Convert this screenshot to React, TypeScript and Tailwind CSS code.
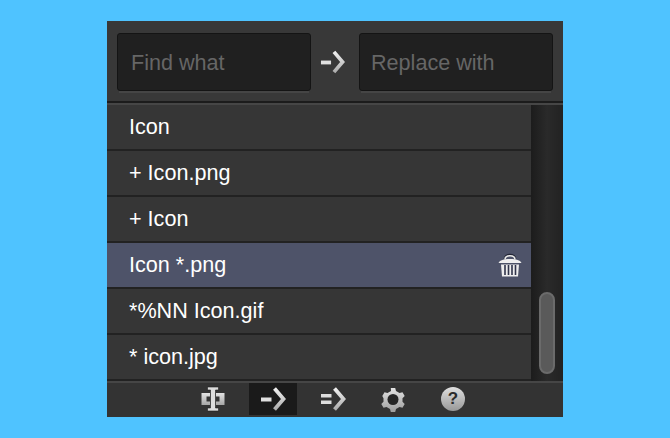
import React from "react";

const rows = ["Icon", "+ Icon.png", "+ Icon", "Icon *.png", "*%NN Icon.gif", "* icon.jpg"];

const Arrow = () => (
  <svg width="26" height="26" viewBox="0 0 26 26" fill="none">
    <defs>
      <linearGradient id="metal" gradientUnits="userSpaceOnUse" x1="0" y1="1" x2="0" y2="25">
        <stop offset="0" stopColor="#f4f4f4" />
        <stop offset="1" stopColor="#a8a8a8" />
      </linearGradient>
    </defs>
    <path d="M1 11.500h10.500v4H1z" fill="#e0e0e0" />
    <path d="M14.500 2.500l9 10.500-9 10.500" stroke="url(#metal)" strokeWidth="3.800" />
  </svg>
);

const DoubleArrow = () => (
  <svg width="26" height="26" viewBox="0 0 26 26" fill="none">
    <path d="M1 8h10.500v3.500H1zM1 14.500h10.500v3.500H1z" fill="#dedede" />
    <path d="M14.500 2.500l9 10.500-9 10.500" stroke="url(#metal)" strokeWidth="3.800" />
  </svg>
);

const Rename = () => (
  <svg width="26" height="26" viewBox="0 0 26 26" fill="none">
    <defs>
      <linearGradient id="block" x1="0" y1="0" x2="0" y2="1">
        <stop offset="0" stopColor="#e2e2e2" />
        <stop offset="1" stopColor="#a6a6a6" />
      </linearGradient>
    </defs>
    <path d="M10 7H1.500v12H10v-3.500H6.500v-5H10zM16 7h8.500v12H16v-3.500h3.500v-5H16z" fill="url(#block)" />
    <path d="M7.500 1h11v3H15.500v18h3v3h-11v-3h3V4h-3z" fill="#dcdcdc" stroke="#1f1f1f" strokeWidth="0.600" />
  </svg>
);

const Gear = () => (
  <svg width="26" height="26" viewBox="0 0 26 26" fill="none">
    <defs>
      <linearGradient id="gear" gradientUnits="userSpaceOnUse" x1="0" y1="1" x2="0" y2="25">
        <stop offset="0" stopColor="#e6e6e6" />
        <stop offset="1" stopColor="#a0a0a0" />
      </linearGradient>
    </defs>
    <path
      d="M10.800 2h4.400l.8 3 3.500 2 3-.8 2.200 3.800-2.200 2.200v3.600l2.200 2.200-2.200 3.800-3-.8-3.500 2-.8 3h-4.400l-.8-3-3.500-2-3 .8-2.200-3.800 2.200-2.200V12.200L2.300 10l2.200-3.800 3 .8 3.500-2z"
      fill="url(#gear)"
    />
    <circle cx="13" cy="13.500" r="5.500" fill="#262626" />
  </svg>
);

const Help = () => (
  <div className="flex h-[24px] w-[24px] items-center justify-center rounded-full bg-gradient-to-b from-[#e0e0e0] to-[#989898] text-[17px] font-bold text-[#2b2b2b]">
    ?
  </div>
);

const Trash = () => (
  <svg width="24" height="24" viewBox="0 0 24 24" fill="none">
    <path d="M6.500 6.500c0-6.500 11-6.500 11 0" stroke="#232636" strokeWidth="2" />
    <path d="M7 6.500c0-5 10-5 10 0" stroke="#e8e8e8" strokeWidth="1.600" />
    <path d="M.5 10c1.500-3 5-4 11.500-4s10 1 11.500 4z" fill="#efefef" />
    <path d="M3 11.500h18l-1 12H4z" fill="#eeeeee" />
    <path d="M7 12v10M10.500 12v10M14 12v10M17.500 12v10" stroke="#30344a" strokeWidth="1.600" />
  </svg>
);

const Field = ({ text, className }: { text: string; className: string }) => (
  <div className="h-[60px] flex-1 px-[2px]">
    <div className={`-mx-[2px] flex h-[58px] items-center rounded-[3px] border border-[#141414] bg-[#202020] pt-[2px] text-[21.6px] text-[#666666] ${className}`}>
      {text}
    </div>
    <div className="h-[2px] bg-[#454545]" />
  </div>
);

export default function App() {
  return (
    <div className="h-[438px] w-[670px] bg-[#4fc3ff] pt-[21px] font-['Liberation_Sans',sans-serif]">
      <div className="mx-auto flex h-[396px] w-[456px] flex-col bg-[#383838]">
        <div className="flex h-[80px] shrink-0 items-start gap-[9px] px-[10px] pt-[12px]">
          <Field text="Find what" className="pl-[13px]" />
          <div className="flex h-[58px] w-[30px] items-center justify-center pr-[5px]">
            <Arrow />
          </div>
          <Field text="Replace with" className="pl-[11px]" />
        </div>
        <div className="h-[2px] shrink-0 bg-[#1c1c1c]" />
        <div className="h-[2px] shrink-0 bg-[#464646]" />
        <div className="flex h-[276px] shrink-0">
          <div className="flex flex-1 flex-col">
            {rows.map((row, i) => (
              <div
                key={row}
                className={`flex h-[46px] shrink-0 items-center justify-between border-b-2 border-[#222222] pl-[22px] pr-[9px] text-[21.6px] text-white ${
                  i === 3 ? "bg-[#4e5369]" : "bg-[#363636]"
                }`}
              >
                <span>{row}</span>
                {i === 3 && <Trash />}
              </div>
            ))}
          </div>
          <div className="flex w-[32px] flex-col justify-end bg-gradient-to-r from-[#1c1c1c] via-[#2a2a2a] to-[#222222] pb-[7px] pl-[8px]">
            <div className="h-[82px] w-[16px] rounded-full border-2 border-[#6b6b6b] bg-[#5a5a5a]" />
          </div>
        </div>
        <div className="h-[2px] shrink-0 bg-[#464646]" />
        <div className="flex flex-1 items-stretch justify-center bg-[#333333] pb-[2px] pr-[4px]">
          <div className="flex w-[60px] items-center justify-center">
            <Rename />
          </div>
          <div className="flex w-[60px] justify-center">
            <div className="flex w-[48px] items-center justify-center bg-[#1a1a1a]">
              <Arrow />
            </div>
          </div>
          <div className="flex w-[60px] items-center justify-center">
            <DoubleArrow />
          </div>
          <div className="flex w-[60px] items-center justify-center">
            <Gear />
          </div>
          <div className="flex w-[60px] items-center justify-center">
            <Help />
          </div>
        </div>
      </div>
    </div>
  );
}
